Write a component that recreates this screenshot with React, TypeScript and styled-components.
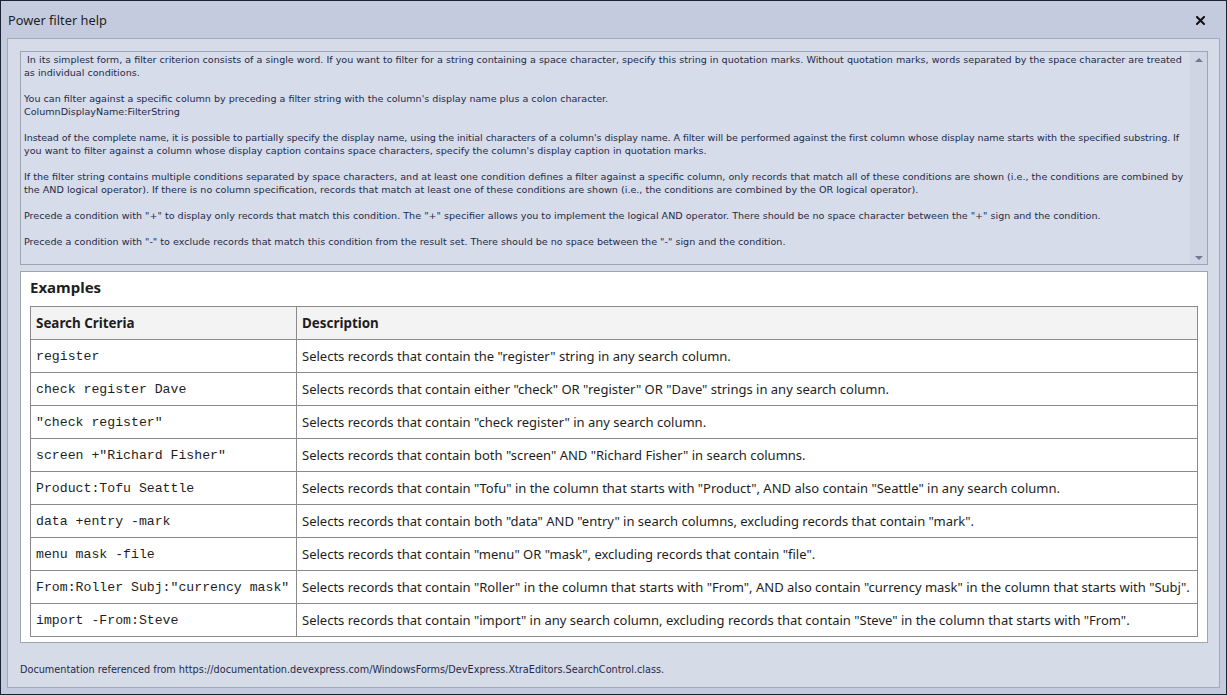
import * as React from 'react'
import styled, { createGlobalStyle } from 'styled-components'

const GlobalStyle = createGlobalStyle`
  html, body {
    margin: 0;
    padding: 0;
    background: #c5cbdf;
  }
  #root {
    width: 1227px;
    height: 695px;
  }
`

type HelpLine = { text: string; squeeze?: boolean }

const helpLines: HelpLine[][] = [
  [
    { text: ' In its simplest form, a filter criterion consists of a single word. If you want to filter for a string containing a space character, specify this string in quotation marks. Without quotation marks, words separated by the space character are treated' },
    { text: 'as individual conditions.' },
  ],
  [
    { text: "You can filter against a specific column by preceding a filter string with the column's display name plus a colon character." },
    { text: 'ColumnDisplayName:FilterString' },
  ],
  [
    {
      text: "Instead of the complete name, it is possible to partially specify the display name, using the initial characters of a column's display name. A filter will be performed against the first column whose display name starts with the specified substring. If",
      squeeze: true,
    },
    { text: "you want to filter against a column whose display caption contains space characters, specify the column's display caption in quotation marks." },
  ],
  [
    { text: 'If the filter string contains multiple conditions separated by space characters, and at least one condition defines a filter against a specific column, only records that match all of these conditions are shown (i.e., the conditions are combined by' },
    { text: 'the AND logical operator). If there is no column specification, records that match at least one of these conditions are shown (i.e., the conditions are combined by the OR logical operator).' },
  ],
  [
    { text: 'Precede a condition with "+" to display only records that match this condition. The "+" specifier allows you to implement the logical AND operator. There should be no space character between the "+" sign and the condition.' },
  ],
  [
    { text: 'Precede a condition with "-" to exclude records that match this condition from the result set. There should be no space between the "-" sign and the condition.' },
  ],
]

const examples: [string, string][] = [
  ['register', 'Selects records that contain the "register" string in any search column.'],
  ['check register Dave', 'Selects records that contain either "check" OR "register" OR "Dave" strings in any search column.'],
  ['"check register"', 'Selects records that contain "check register" in any search column.'],
  ['screen +"Richard Fisher"', 'Selects records that contain both "screen" AND "Richard Fisher" in search columns.'],
  ['Product:Tofu Seattle', 'Selects records that contain "Tofu" in the column that starts with "Product", AND also contain "Seattle" in any search column.'],
  ['data +entry -mark', 'Selects records that contain both "data" AND "entry" in search columns, excluding records that contain "mark".'],
  ['menu mask -file', 'Selects records that contain "menu" OR "mask", excluding records that contain "file".'],
  ['From:Roller Subj:"currency mask"', 'Selects records that contain "Roller" in the column that starts with "From", AND also contain "currency mask" in the column that starts with "Subj".'],
  ['import -From:Steve', 'Selects records that contain "import" in any search column, excluding records that contain "Steve" in the column that starts with "From".'],
]

export default function App() {
  return (
    <>
      <GlobalStyle />
      <Window>
        <TitleBar>
          <Title>Power filter help</Title>
          <CloseButton>
            <svg width="9" height="9" viewBox="0 0 9 9">
              <path d="M1 1 L8 8 M8 1 L1 8" stroke="#111" strokeWidth="2" strokeLinecap="square" />
            </svg>
          </CloseButton>
        </TitleBar>
        <Body>
          <Memo>
            <MemoText>
              {helpLines.map((para, i) => (
                <Paragraph key={i}>
                  {para.map((line, j) => (
                    <Line key={j} squeeze={line.squeeze}>
                      {line.text}
                    </Line>
                  ))}
                </Paragraph>
              ))}
            </MemoText>
            <ScrollBar>
              <Arrow direction="up" />
              <Arrow direction="down" />
            </ScrollBar>
          </Memo>
          <ExamplesPanel>
            <Heading>Examples</Heading>
            <Table>
              <colgroup>
                <col style={{ width: 266 }} />
                <col />
              </colgroup>
              <thead>
                <tr>
                  <HeadCell>Search Criteria</HeadCell>
                  <HeadCell>Description</HeadCell>
                </tr>
              </thead>
              <tbody>
                {examples.map(([criteria, desc]) => (
                  <tr key={criteria}>
                    <Cell mono>{criteria}</Cell>
                    <Cell>{desc}</Cell>
                  </tr>
                ))}
              </tbody>
            </Table>
          </ExamplesPanel>
          <Footer>
            Documentation referenced from https://documentation.devexpress.com/WindowsForms/DevExpress.XtraEditors.SearchControl.class.
          </Footer>
        </Body>
      </Window>
    </>
  )
}

const Window = styled.div`
  box-sizing: border-box;
  width: 1227px;
  height: 695px;
  border: 1px solid #1a2332;
  background: #c5cbdf;
  display: flex;
  flex-direction: column;
`

const TitleBar = styled.div`
  height: 37px;
  flex: none;
  display: flex;
  align-items: center;
  justify-content: space-between;
  padding: 0 21px 0 7px;
`

const Title = styled.div`
  font-family: 'Noto Sans', 'Open Sans', sans-serif;
  font-size: 12.8px;
  color: #1e1e1e;
  padding-top: 1px;
`

const CloseButton = styled.div`
  display: flex;
  align-items: center;
  padding-top: 1px;
`

const Body = styled.div`
  flex: 1;
  margin: 0 6px 6px 6px;
  border: 1px solid #a3abbb;
  background: #d6dbe8;
  padding: 12px 11px 0 12px;
  display: flex;
  flex-direction: column;
  gap: 6px;
`

const Memo = styled.div`
  box-sizing: border-box;
  height: 214px;
  border: 1px solid #9da5b5;
  background: #d6dce9;
  display: flex;
`

const MemoText = styled.div`
  flex: 1;
  padding: 1px 0 0 3px;
  font-family: 'DejaVu Sans', Tahoma, sans-serif;
  font-size: 9.58px;
  line-height: 13px;
  color: #1f2a4a;
  white-space: pre;
  overflow: hidden;
`

const Paragraph = styled.div`
  margin-bottom: 13px;
`

const Line = styled.div<{ squeeze?: boolean }>`
  letter-spacing: ${p => (p.squeeze ? '-0.09px' : 'normal')};
`

const ScrollBar = styled.div`
  width: 17px;
  flex: none;
  background: #cfd5e3;
  display: flex;
  flex-direction: column;
  justify-content: space-between;
  align-items: center;
  padding: 6px 0 4px;
`

const Arrow = styled.div<{ direction: 'up' | 'down' }>`
  width: 0;
  height: 0;
  border-left: 4px solid transparent;
  border-right: 4px solid transparent;
  ${p =>
    p.direction === 'up'
      ? 'border-bottom: 4px solid #6f7b92;'
      : 'border-top: 4px solid #6f7b92;'}
`

const ExamplesPanel = styled.div`
  box-sizing: border-box;
  height: 372px;
  border: 1px solid #9da5b5;
  background: #ffffff;
  padding: 0 9px 0 9px;
`

const Heading = styled.div`
  font-family: 'Noto Sans', 'Open Sans', sans-serif;
  font-weight: bold;
  font-size: 15px;
  color: #1e1e1e;
  height: 34px;
  line-height: 30px;
`

const Table = styled.table`
  width: 100%;
  table-layout: fixed;
  border-collapse: collapse;
  border: 1px solid #8a8a8a;
`

const HeadCell = styled.th`
  height: 33px;
  box-sizing: border-box;
  border: 1px solid #8a8a8a;
  background: #f3f3f3;
  text-align: left;
  padding: 0 5px;
  font-family: 'Noto Sans', 'Open Sans', sans-serif;
  font-weight: bold;
  font-size: 13.4px;
  color: #1e1e1e;
`

const Cell = styled.td<{ mono?: boolean }>`
  height: 33px;
  box-sizing: border-box;
  border: 1px solid #8a8a8a;
  padding: ${p => (p.mono ? '1px 5px 0' : '0 5px')};
  white-space: nowrap;
  overflow: hidden;
  font-family: ${p => (p.mono ? "'Liberation Mono', 'Courier New', monospace" : "'Noto Sans', 'Open Sans', sans-serif")};
  font-size: ${p => (p.mono ? '13.2px' : '13px')};
  color: #1e1e1e;
`

const Footer = styled.div`
  flex: 1;
  display: flex;
  align-items: center;
  padding-top: 2px;
  font-family: 'DejaVu Sans', Tahoma, sans-serif;
  font-size: 9.7px;
  color: #1f2a4a;
`
